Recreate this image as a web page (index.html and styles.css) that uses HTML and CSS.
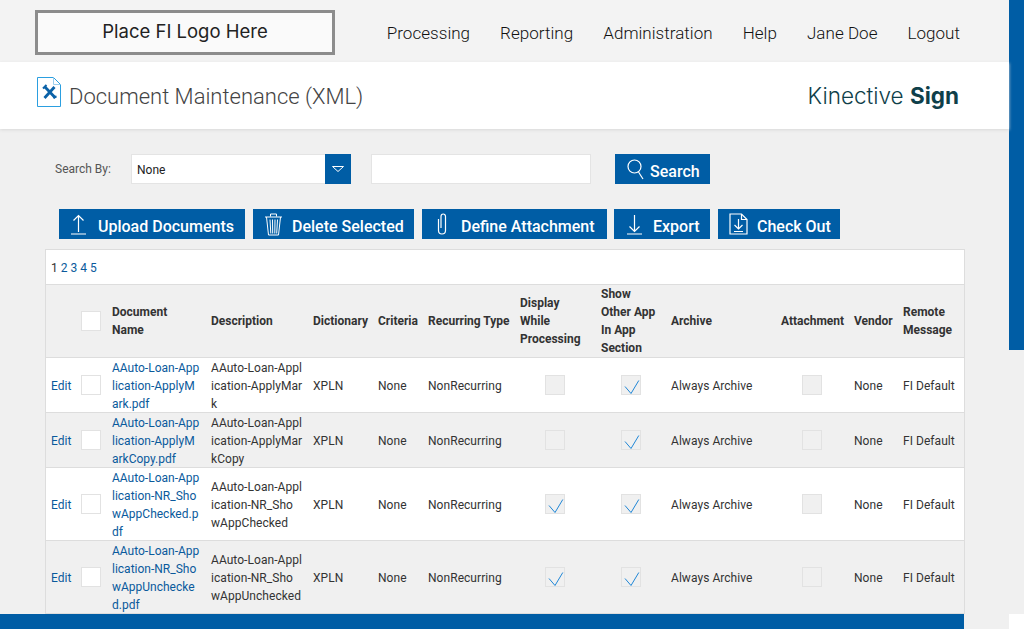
FILE: index.html
```html
<!DOCTYPE html>
<html lang="en">
<head>
  <meta charset="UTF-8">
  <title>Document Maintenance (XML)</title>
  <link rel="stylesheet" href="styles.css">
</head>
<body>
  <div class="page">
    <div class="main">
      <header class="topbar">
        <div class="logo-box">Place FI Logo Here</div>
        <nav class="nav">
          <a>Processing</a>
          <a>Reporting</a>
          <a>Administration</a>
          <a>Help</a>
          <a>Jane Doe</a>
          <a>Logout</a>
        </nav>
      </header>

      <div class="titlebar">
        <svg class="title-icon" width="24" height="30" viewBox="0 0 24 30">
          <path d="M.5 .5h16l7 7v22h-23z" fill="#fff" stroke="#2b9fe0"/>
          <path d="M16.500 .5v7h7" fill="none" stroke="#9ccfee"/>
          <path d="M8 10l10.500 11M7.500 21l10-11" fill="none" stroke="#0b62a8" stroke-width="2.800"/>
          <path d="M6 11.500l3.500-3.500M16 20.500l3.500-1" fill="none" stroke="#0b62a8" stroke-width="2"/>
        </svg>
        <h1 class="title">Document Maintenance (XML)</h1>
        <div class="brand">Kinective <b>Sign</b></div>
      </div>

      <div class="content">
        <div class="search-row">
          <label class="search-label">Search By:</label>
          <div class="select">
            <span class="select-value">None</span>
            <span class="select-arrow">
              <svg width="12" height="6" viewBox="0 0 12 6"><path d="M.5.500h11l-5.500 5z" fill="none" stroke="#fff"/></svg>
            </span>
          </div>
          <input class="search-input" type="text">
          <button class="btn btn-search">
            <svg width="17" height="21" viewBox="0 0 17 21"><circle cx="7.500" cy="7.500" r="6.500" fill="none" stroke="#fff" stroke-width="1.200"/><path d="M11.500 13l4.500 7" stroke="#fff" stroke-width="1.200"/></svg>
            <span class="btn-label">Search</span>
          </button>
        </div>

        <div class="action-row">
          <button class="btn btn-upload">
            <svg width="15" height="21" viewBox="0 0 15 21"><path d="M7.500 18V1.500M2.500 6.500l5-5 5 5M0 20h15" fill="none" stroke="#fff" stroke-width="1.200"/></svg>
            <span class="btn-label">Upload Documents</span>
          </button>
          <button class="btn btn-delete">
            <svg width="19" height="23" viewBox="0 0 19 23"><path d="M1 4h17M6.500 3.500V1h6v2.500M2.500 4l2 18h10l2-18M6 6.500l.8 14M8.500 6.500l.2 14M11 6.500l-.2 14M13.500 6.500l-.8 14" fill="none" stroke="#fff"/></svg>
            <span class="btn-label">Delete Selected</span>
          </button>
          <button class="btn btn-attach">
            <svg width="10" height="22" viewBox="0 0 10 22"><path d="M1.500 6v11.500a3.500 3.500 0 0 0 7 0V3.500a2.250 2.500 0 0 0-4.500 0V15" fill="none" stroke="#fff" stroke-width="1.200"/></svg>
            <span class="btn-label">Define Attachment</span>
          </button>
          <button class="btn btn-export">
            <svg width="15" height="21" viewBox="0 0 15 21"><path d="M7.500 1v16.500M2.500 12.500l5 5 5-5M0 20h15" fill="none" stroke="#fff" stroke-width="1.200"/></svg>
            <span class="btn-label">Export</span>
          </button>
          <button class="btn btn-checkout">
            <svg width="19" height="22" viewBox="0 0 19 22"><path d="M1 1h11.500l5.500 5.500v14.500H1z" fill="none" stroke="#fff" stroke-width="1.200"/><path d="M12.500 1v5.500H18M9.500 6v10M5.500 12l4 4 4-4M5 18.500h9" fill="none" stroke="#fff" stroke-width="1.200"/></svg>
            <span class="btn-label">Check Out</span>
          </button>
        </div>

        <div class="grid-box">
          <div class="pager"><span>1</span> <a>2</a> <a>3</a> <a>4</a> <a>5</a></div>
          <table class="grid">
            <colgroup>
              <col class="c-edit"><col class="c-sel"><col class="c-name"><col class="c-desc"><col class="c-dict">
              <col class="c-crit"><col class="c-rec"><col class="c-disp"><col class="c-show"><col class="c-arch">
              <col class="c-att"><col class="c-vend"><col class="c-rem">
            </colgroup>
            <thead>
              <tr>
                <th></th>
                <th><span class="box"></span></th>
                <th>Document<br>Name</th>
                <th>Description</th>
                <th>Dictionary</th>
                <th>Criteria</th>
                <th>Recurring Type</th>
                <th>Display<br>While<br>Processing</th>
                <th>Show<br>Other App<br>In App<br>Section</th>
                <th>Archive</th>
                <th>Attachment</th>
                <th>Vendor</th>
                <th>Remote<br>Message</th>
              </tr>
            </thead>
            <tbody>
              <tr>
                <td><a class="cell">Edit</a></td>
                <td><span class="box"></span></td>
                <td><a class="cell">AAuto-Loan-App<br>lication-ApplyM<br>ark.pdf</a></td>
                <td><div class="cell">AAuto-Loan-Appl<br>ication-ApplyMar<br>k</div></td>
                <td><div class="cell">XPLN</div></td>
                <td><div class="cell">None</div></td>
                <td><div class="cell">NonRecurring</div></td>
                <td class="center"><span class="box off"></span></td>
                <td class="center"><span class="box off"><svg width="18" height="18" viewBox="0 0 18 18"><path d="M3 10.500l6 7L16.800 4.500" fill="none" stroke="#1f86d6"/></svg></span></td>
                <td><div class="cell">Always Archive</div></td>
                <td class="center"><span class="box off"></span></td>
                <td><div class="cell">None</div></td>
                <td><div class="cell">FI Default</div></td>
              </tr>
              <tr>
                <td><a class="cell">Edit</a></td>
                <td><span class="box"></span></td>
                <td><a class="cell">AAuto-Loan-App<br>lication-ApplyM<br>arkCopy.pdf</a></td>
                <td><div class="cell">AAuto-Loan-Appl<br>ication-ApplyMar<br>kCopy</div></td>
                <td><div class="cell">XPLN</div></td>
                <td><div class="cell">None</div></td>
                <td><div class="cell">NonRecurring</div></td>
                <td class="center"><span class="box off"></span></td>
                <td class="center"><span class="box off"><svg width="18" height="18" viewBox="0 0 18 18"><path d="M3 10.500l6 7L16.800 4.500" fill="none" stroke="#1f86d6"/></svg></span></td>
                <td><div class="cell">Always Archive</div></td>
                <td class="center"><span class="box off"></span></td>
                <td><div class="cell">None</div></td>
                <td><div class="cell">FI Default</div></td>
              </tr>
              <tr>
                <td><a class="cell">Edit</a></td>
                <td><span class="box"></span></td>
                <td><a class="cell">AAuto-Loan-App<br>lication-NR_Sho<br>wAppChecked.p<br>df</a></td>
                <td><div class="cell">AAuto-Loan-Appl<br>ication-NR_Sho<br>wAppChecked</div></td>
                <td><div class="cell">XPLN</div></td>
                <td><div class="cell">None</div></td>
                <td><div class="cell">NonRecurring</div></td>
                <td class="center"><span class="box off"><svg width="18" height="18" viewBox="0 0 18 18"><path d="M3 10.500l6 7L16.800 4.500" fill="none" stroke="#1f86d6"/></svg></span></td>
                <td class="center"><span class="box off"><svg width="18" height="18" viewBox="0 0 18 18"><path d="M3 10.500l6 7L16.800 4.500" fill="none" stroke="#1f86d6"/></svg></span></td>
                <td><div class="cell">Always Archive</div></td>
                <td class="center"><span class="box off"></span></td>
                <td><div class="cell">None</div></td>
                <td><div class="cell">FI Default</div></td>
              </tr>
              <tr>
                <td><a class="cell">Edit</a></td>
                <td><span class="box"></span></td>
                <td><a class="cell">AAuto-Loan-App<br>lication-NR_Sho<br>wAppUnchecke<br>d.pdf</a></td>
                <td><div class="cell">AAuto-Loan-Appl<br>ication-NR_Sho<br>wAppUnchecked</div></td>
                <td><div class="cell">XPLN</div></td>
                <td><div class="cell">None</div></td>
                <td><div class="cell">NonRecurring</div></td>
                <td class="center"><span class="box off"><svg width="18" height="18" viewBox="0 0 18 18"><path d="M3 10.500l6 7L16.800 4.500" fill="none" stroke="#1f86d6"/></svg></span></td>
                <td class="center"><span class="box off"><svg width="18" height="18" viewBox="0 0 18 18"><path d="M3 10.500l6 7L16.800 4.500" fill="none" stroke="#1f86d6"/></svg></span></td>
                <td><div class="cell">Always Archive</div></td>
                <td class="center"><span class="box off"></span></td>
                <td><div class="cell">None</div></td>
                <td><div class="cell">FI Default</div></td>
              </tr>
            </tbody>
          </table>
        </div>
      </div>

      <footer class="footer"></footer>
    </div>

    <div class="scrollbar">
      <div class="scroll-thumb"></div>
      <div class="scroll-track"></div>
      <div class="scroll-corner"></div>
    </div>
  </div>
</body>
</html>
```

FILE: styles.css
```css
html, body {
  margin: 0;
  height: 629px;
  overflow: hidden;
}

body {
  font-family: Roboto, sans-serif;
  font-size: 12px;
  color: #333;
  background-color: #f0f0f0;
}

a {
  color: #0a5a9c;
}

.page {
  display: flex;
  height: 629px;
}

.main {
  display: flex;
  flex-direction: column;
  width: 1009px;
}

/* top bar */
.topbar {
  display: flex;
  align-items: flex-start;
  justify-content: space-between;
  height: 62px;
  padding: 10px 49px 0 35px;
  box-sizing: border-box;
  background-color: #f3f3f3;
}

.logo-box {
  width: 300px;
  height: 45px;
  box-sizing: border-box;
  border: 3px solid #8c8c8c;
  background-color: #fafafa;
  color: #222;
  font-family: Inter, sans-serif;
  font-size: 18.500px;
  line-height: 37px;
  text-align: center;
}

.nav {
  display: flex;
  gap: 30px;
  padding-top: 13px;
  font-size: 17px;
  font-weight: 300;
  line-height: 20px;
  letter-spacing: .04px;
}

.nav a {
  color: #111;
}

/* title band */
.titlebar {
  display: flex;
  align-items: center;
  height: 67px;
  padding: 0 50px 0 37px;
  background-color: #fff;
  box-shadow: 0 1px 3px #d8d8d8;
  position: relative;
}

.title-icon {
  margin: -7px 8px 0 0;
}

.title {
  margin: 2px 0 0;
  font-size: 22px;
  font-weight: 300;
  color: #444;
}

.brand {
  margin: 0 0 0 auto;
  font-family: Inter, sans-serif;
  font-size: 22.500px;
  font-weight: 300;
  color: #0f3f4a;
}

.brand b {
  font-weight: 700;
}

/* search + buttons */
.content {
  flex: 1;
  min-height: 0;
  overflow: hidden;
  padding: 25px 0 0 45px;
}

.search-row {
  display: flex;
  align-items: center;
  padding-left: 10px;
}

.search-label {
  width: 76px;
  color: #555;
}

.select {
  display: flex;
  width: 220px;
  height: 30px;
  box-sizing: border-box;
  border: 1px solid #e4e4e4;
  border-right: 0;
  background-color: #fff;
}

.select-value {
  flex: 1;
  padding: 1px 0 0 5px;
  line-height: 28px;
  color: #222;
}

.select-arrow {
  display: flex;
  align-items: center;
  justify-content: center;
  width: 26px;
  margin: -1px 0;
  background-color: #005da5;
}

.search-input {
  width: 220px;
  height: 30px;
  box-sizing: border-box;
  margin: 0 24px 0 20px;
  border: 1px solid #e4e4e4;
  background-color: #fff;
}

.btn {
  display: flex;
  align-items: center;
  height: 30px;
  padding: 0;
  border: 0;
  background-color: #005da5;
  color: #fff;
  font-family: Roboto, sans-serif;
  font-size: 16px;
  font-weight: 500;
}

.btn-label {
  padding-top: 4px;
}

.btn-search {
  width: 95px;
  gap: 6px;
  padding-left: 12px;
}

.action-row {
  display: flex;
  gap: 8px;
  margin: 25px 0 10px 14px;
}

.btn-upload {
  width: 186px;
  gap: 12px;
  padding-left: 12px;
}

.btn-delete {
  width: 161px;
  gap: 9px;
  padding-left: 11px;
}

.btn-attach {
  width: 185px;
  gap: 14px;
  padding-left: 15px;
}

.btn-export {
  width: 96px;
  gap: 11px;
  padding-left: 13px;
  margin-left: -1px;
}

.btn-checkout {
  width: 122px;
  gap: 9px;
  padding-left: 11px;
}

/* table */
.grid-box {
  width: 920px;
  box-sizing: border-box;
  border: 1px solid #ddd;
  background-color: #fff;
}

.pager {
  height: 34px;
  padding-left: 5px;
  line-height: 36px;
}

.grid {
  width: 918px;
  table-layout: fixed;
  border-collapse: separate;
  border-spacing: 0;
}

.c-edit { width: 30px; }
.c-sel { width: 31px; }
.c-name { width: 99px; }
.c-desc { width: 102px; }
.c-dict { width: 65px; }
.c-crit { width: 50px; }
.c-rec { width: 92px; }
.c-disp { width: 81px; }
.c-show { width: 70px; }
.c-arch { width: 110px; }
.c-att { width: 73px; }
.c-vend { width: 49px; }
.c-rem { width: 66px; }

.grid th,
.grid td {
  padding: 0 5px;
  border-top: 1px solid #ddd;
  line-height: 18px;
  text-align: left;
  vertical-align: middle;
  white-space: nowrap;
}

.cell {
  display: block;
  margin: 1px 0 -1px;
  letter-spacing: .05px;
}

a.cell {
  letter-spacing: 0;
}

.grid th {
  background-color: #f0f0f0;
  font-weight: 700;
}

.grid tbody tr:nth-child(even) td {
  background-color: #f0f0f0;
}

.grid .center {
  padding-right: 6px;
  text-align: center;
}

.box {
  display: inline-block;
  width: 20px;
  height: 20px;
  box-sizing: border-box;
  border: 1px solid #e2e2e2;
  background-color: #fff;
  vertical-align: middle;
}

.box.off {
  background-color: #f0f0f0;
}

.box svg {
  display: block;
}

.footer {
  flex: none;
  width: 964px;
  height: 15px;
  background-color: #005da5;
}

/* fake scrollbar */
.scrollbar {
  display: flex;
  flex-direction: column;
  width: 15px;
}

.scroll-thumb {
  height: 350px;
  background-color: #005da5;
}

.scroll-track {
  flex: 1;
}

.scroll-corner {
  height: 15px;
  background-color: #fff;
}
```
